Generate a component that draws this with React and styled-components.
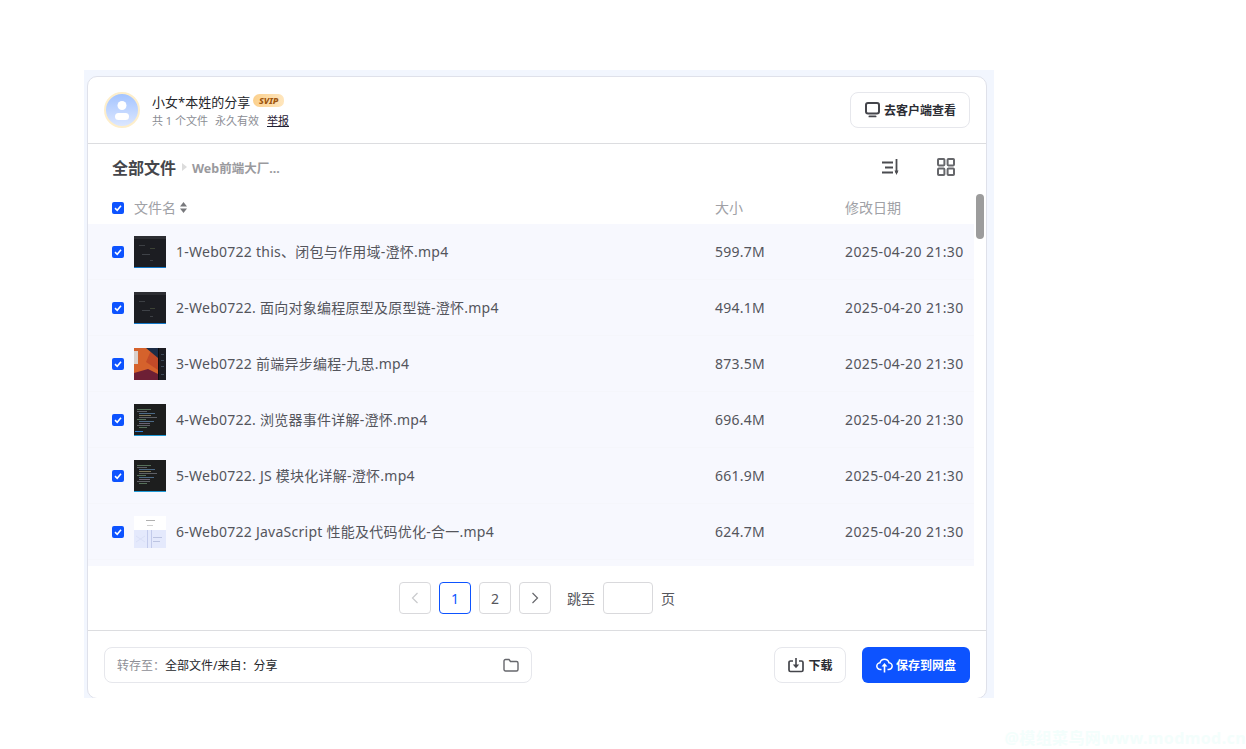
import React from "react";
import styled, { createGlobalStyle } from "styled-components";

const GlobalStyle = createGlobalStyle`
  html, body {
    margin: 0;
    padding: 0;
    background: #fff;
    font-family: "Noto Sans", "Noto Sans CJK SC", sans-serif;
  }
  * { box-sizing: border-box; }
`;

const Page = styled.div`
  position: relative;
  width: 1246px;
  height: 749px;
  padding: 70px 0 0 84px;
  overflow: hidden;
`;
const Halo = styled.div`
  width: 910px;
  height: 628px;
  padding: 6px 7px 0 3px;
  background: #f2f6fe;
  overflow: hidden;
`;
const Card = styled.div`
  position: relative;
  width: 900px;
  height: 623px;
  background: #fff;
  border: 1px solid #dfe1ea;
  border-radius: 10px;
  display: flex;
  flex-direction: column;
`;
const Header = styled.div`
  height: 67px;
  flex: none;
  padding: 0 16px;
  display: flex;
  align-items: center;
  border-bottom: 1px solid #dcdde0;
`;
const Avatar = styled.div`
  width: 36px;
  height: 36px;
  flex: none;
  border-radius: 50%;
  border: 2px solid #fdeecb;
  background: linear-gradient(180deg, #a4c4ff, #dce7ff);
  display: flex;
  align-items: center;
  justify-content: center;
`;
const Owner = styled.div`
  margin-left: 12px;
  flex: 1;
`;
const OwnerName = styled.div`
  display: flex;
  align-items: center;
  height: 18px;
  font-size: 13px;
  color: #25262b;
`;
const Badge = styled.span`
  margin: -2px 0 0 3px;
  width: 31px;
  height: 13px;
  border-radius: 7px 6px 6px 7px;
  background: linear-gradient(90deg, #fbd08d, #ffe6bd);
  color: #a0560e;
  font-size: 9px;
  line-height: 13px;
  font-weight: 800;
  font-style: italic;
  text-align: center;
`;
const OwnerMeta = styled.div`
  display: flex;
  gap: 8px;
  margin-top: 2px;
  height: 16px;
  align-items: center;
  font-size: 11px;
  color: #8b8d94;
`;
const FileCount = styled.span`
  width: 55px;
  white-space: nowrap;
`;
const Report = styled.span`
  color: #1f2033;
  text-decoration: underline;
`;
const GhostButton = styled.div`
  height: 36px;
  width: ${(p) => p.$width}px;
  flex: none;
  padding-left: 1px;
  border: 1px solid #e6e7ec;
  border-radius: 8px;
  background: #fff;
  display: flex;
  align-items: center;
  justify-content: center;
  gap: 4px;
  font-size: 12px;
  font-weight: 700;
  color: #2b2c33;
`;
const Crumbs = styled.div`
  height: 46px;
  flex: none;
  padding: 0 31px 0 24px;
  display: flex;
  align-items: center;
`;
const CrumbRoot = styled.span`
  font-size: 16px;
  font-weight: 700;
  color: #45464b;
`;
const CrumbArrow = styled.span`
  width: 0;
  height: 0;
  margin: 0 5px 0 6px;
  border-left: 5px solid #dcdcdc;
  border-top: 4px solid transparent;
  border-bottom: 4px solid transparent;
`;
const CrumbLeaf = styled.span`
  flex: 1;
  font-size: 12.5px;
  font-weight: 700;
  color: #9a9a9e;
`;
const ViewTools = styled.div`
  display: flex;
  align-items: center;
  gap: 37px;
`;
const Columns = styled.div`
  display: grid;
  grid-template-columns: 603px 130px 1fr;
  padding-left: 24px;
  width: 886px;
`;
const HeadRow = styled(Columns)`
  height: 34px;
  flex: none;
  align-items: center;
  font-size: 14px;
  color: #a0a1a6;
`;
const NameHead = styled.div`
  display: flex;
  align-items: center;
`;
const HeadCheck = styled.span`
  display: flex;
  margin: 2px 10px 0 0;
`;
const HeadSort = styled.span`
  display: inline-flex;
  margin-left: 4px;
`;
const List = styled.div`
  width: 886px;
  height: 342px;
  flex: none;
  background: #f7f8fe;
`;
const Row = styled(Columns)`
  height: 56px;
  align-items: center;
  font-size: 14px;
  letter-spacing: 0.25px;
  line-height: 20px;
  color: #54555c;
  border-bottom: 1px solid #f5f6fb;
`;
const NameCell = styled.div`
  display: flex;
  align-items: center;
`;
const DateCell = styled.span`
  letter-spacing: 0.38px;
  white-space: nowrap;
`;
const Check = styled.span`
  width: 12px;
  height: 12px;
  flex: none;
  border-radius: 2px;
  background: #0d53ff;
  display: flex;
  align-items: center;
  justify-content: center;
`;
const ThumbBox = styled.span`
  width: 32px;
  height: 32px;
  margin: 0 10px;
  flex: none;
  display: block;
  line-height: 0;
`;
const Scrollbar = styled.div`
  position: absolute;
  left: 888px;
  top: 117px;
  width: 8px;
  height: 45px;
  border-radius: 4px;
  background: #9c9c9c;
`;
const Pager = styled.div`
  height: 65px;
  flex: none;
  display: flex;
  align-items: center;
  justify-content: center;
  gap: 8px;
  font-size: 14px;
  color: #55565c;
  border-bottom: 1px solid #dcdde0;
`;
const PageButton = styled.div`
  width: 32px;
  height: 32px;
  border-radius: 4px;
  border: 1px solid ${(p) => (p.$active ? "#0d53ff" : "#d9d9dc")};
  color: ${(p) => (p.$active ? "#0d53ff" : "#55565c")};
  display: flex;
  align-items: center;
  justify-content: center;
`;
const JumpLabel = styled.span`
  margin-left: 8px;
`;
const JumpInput = styled.div`
  width: 50px;
  height: 32px;
  border: 1px solid #d9d9dc;
  border-radius: 4px;
`;
const Footer = styled.div`
  flex: none;
  padding: 16px 16px 0;
  display: flex;
  align-items: center;
`;
const SavePath = styled.div`
  width: 428px;
  height: 36px;
  margin-right: auto;
  padding: 0 12px;
  border: 1px solid #e6e7ec;
  border-radius: 8px;
  display: flex;
  align-items: center;
  font-size: 12px;
  color: #26272b;
`;
const SaveLabel = styled.span`
  color: #8e8f96;
`;
const SaveValue = styled.span`
  flex: 1;
`;
const PrimaryButton = styled.div`
  width: 108px;
  height: 36px;
  margin-left: 16px;
  border-radius: 6px;
  background: #0d53ff;
  color: #fff;
  font-size: 12px;
  font-weight: 700;
  display: flex;
  align-items: center;
  justify-content: center;
  gap: 3px;
`;
const Watermark = styled.div`
  position: absolute;
  right: 0;
  bottom: 0;
  font-size: 16px;
  font-weight: 700;
  letter-spacing: 0.4px;
  white-space: nowrap;
  color: #f3fefc;
`;

const files = [
  { name: "1-Web0722 this、闭包与作用域-澄怀.mp4", size: "599.7M", thumb: "dark" },
  { name: "2-Web0722. 面向对象编程原型及原型链-澄怀.mp4", size: "494.1M", thumb: "dark2" },
  { name: "3-Web0722 前端异步编程-九思.mp4", size: "873.5M", thumb: "orange" },
  { name: "4-Web0722. 浏览器事件详解-澄怀.mp4", size: "696.4M", thumb: "code" },
  { name: "5-Web0722. JS 模块化详解-澄怀.mp4", size: "661.9M", thumb: "code2" },
  { name: "6-Web0722 JavaScript 性能及代码优化-合一.mp4", size: "624.7M", thumb: "light" },
];

const codeLines = [
  [3, 5, 14, "#56705a"], [3, 7, 10, "#5e6066"], [5, 9, 16, "#4d6a86"], [5, 11, 12, "#7c7558"],
  [5, 13, 18, "#5e6066"], [3, 15, 9, "#56705a"], [5, 17, 15, "#4d6a86"], [5, 19, 11, "#6a6274"],
  [3, 21, 13, "#5e6066"], [5, 23, 8, "#56705a"],
];

function Thumb({ kind }) {
  if (kind === "orange") {
    return (
      <svg width="32" height="32" viewBox="0 0 32 32">
        <rect width="32" height="32" fill="#1c1c22" />
        <rect width="24" height="32" fill="#c24a28" />
        <path d="M0 0H18L12 14 24 22V32H0Z" fill="#d5622c" />
        <path d="M0 25L14 21 24 26V32H0Z" fill="#6d1f35" />
        <path d="M12 0H24V10Z" fill="#1d2c46" />
        <rect x="0" y="3" width="4" height="13" fill="#d9cfca" />
        <rect x="24" y="0" width="1" height="32" fill="#0c0c10" />
        <rect x="27" y="6" width="3" height="1" fill="#3f4a58" />
        <rect x="27" y="12" width="3" height="1" fill="#3f4a58" />
        <rect x="27" y="18" width="3" height="1" fill="#3f4a58" />
        <rect x="27" y="26" width="3" height="1" fill="#3f4a58" />
      </svg>
    );
  }
  if (kind === "light") {
    return (
      <svg width="32" height="32" viewBox="0 0 32 32">
        <rect width="32" height="32" fill="#fff" />
        <rect x="12" y="4" width="9" height="1" fill="#b0b0b0" />
        <rect x="13" y="9" width="6" height="1" fill="#cfcfcf" />
        <rect y="14" width="32" height="18" fill="#e4e9fc" />
        <rect x="13" y="14" width="1" height="18" fill="#c3cbeb" />
        <rect x="17" y="14" width="1" height="18" fill="#c3cbeb" />
        <path d="M2 20L11 26M2 26L11 20" stroke="#d2d8f2" strokeWidth="0.6" />
        <rect x="19" y="21" width="9" height="1" fill="#bcc4e2" />
        <rect x="19" y="25" width="7" height="1" fill="#bcc4e2" />
      </svg>
    );
  }
  if (kind === "code" || kind === "code2") {
    return (
      <svg width="32" height="32" viewBox="0 0 32 32">
        <rect width="32" height="32" fill="#1d1e1e" />
        {codeLines.map(([x, y, w, c], i) => (
          <rect key={i} x={x} y={y} width={w} height="1" fill={c} />
        ))}
        <rect x="0" y="31" width="32" height="1" fill="#1f9ad6" />
        {kind === "code" && <rect x="1" y="27" width="8" height="1" fill="#2b7fd0" />}
      </svg>
    );
  }
  return (
    <svg width="32" height="32" viewBox="0 0 32 32">
      <rect width="32" height="32" fill="#1c1d22" />
      <rect width="32" height="3" fill="#2d2e33" />
      <rect x="5" y="9" width="6" height="1" fill="#3c3f44" />
      <rect x="8" y="18" width="8" height="1" fill="#3f4248" />
      <rect x="16" y={kind === "dark" ? 12 : 16} width="5" height="1" fill="#3c4234" />
      <rect x="16" y="24" width="3" height="1" fill="#3c3f44" />
      <rect y="31" width="32" height="1" fill="#1378c8" />
    </svg>
  );
}

function CheckBox() {
  return (
    <Check>
      <svg width="8" height="8" viewBox="0 0 8 8">
        <path d="M1 4.2L3.2 6.3 7 1.8" fill="none" stroke="#fff" strokeWidth="1.6" />
      </svg>
    </Check>
  );
}

function App() {
  return (
    <Page>
      <GlobalStyle />
      <Halo>
        <Card>
          <Header>
            <Avatar>
              <svg width="20" height="24" viewBox="0 0 20 24">
                <circle cx="10" cy="7.5" r="4.5" fill="#fff" />
                <rect x="3" y="15" width="14" height="7" rx="3.5" fill="#fff" />
              </svg>
            </Avatar>
            <Owner>
              <OwnerName>
                小女*本姓的分享<Badge>SVIP</Badge>
              </OwnerName>
              <OwnerMeta>
                <FileCount>共 1 个文件</FileCount>
                <span>永久有效</span>
                <Report>举报</Report>
              </OwnerMeta>
            </Owner>
            <GhostButton $width={120}>
              <svg width="15" height="16" viewBox="0 0 15 16">
                <rect x="1" y="1" width="13" height="10.5" rx="2" fill="none" stroke="#44454b" strokeWidth="2" />
                <rect x="3.5" y="13.5" width="8" height="1.8" rx="0.9" fill="#44454b" />
              </svg>
              去客户端查看
            </GhostButton>
          </Header>
          <Crumbs>
            <CrumbRoot>全部文件</CrumbRoot>
            <CrumbArrow />
            <CrumbLeaf>Web前端大厂...</CrumbLeaf>
            <ViewTools>
              <svg width="19" height="16" viewBox="0 0 19 16">
                <path d="M1 3.5H12M4 8.5H12M1 13.5H12" stroke="#4b4c50" strokeWidth="1.8" />
                <path d="M15.5 0V14" stroke="#4b4c50" strokeWidth="1.8" />
                <path d="M13.5 11.5L15.5 16 17.5 11.5Z" fill="#4b4c50" />
              </svg>
              <svg width="18" height="18" viewBox="0 0 18 18">
                <g fill="none" stroke="#66676b" strokeWidth="2">
                  <rect x="1" y="1" width="6.4" height="6.4" rx="0.8" />
                  <rect x="10.6" y="1" width="6.4" height="6.4" rx="0.8" />
                  <rect x="1" y="10.6" width="6.4" height="6.4" rx="0.8" />
                  <rect x="10.6" y="10.6" width="6.4" height="6.4" rx="0.8" />
                </g>
              </svg>
            </ViewTools>
          </Crumbs>
          <HeadRow>
            <NameHead>
              <HeadCheck>
                <CheckBox />
              </HeadCheck>
              <span>文件名</span>
              <HeadSort>
                <svg width="7" height="11" viewBox="0 0 7 11">
                  <path d="M3.5 0L7 4.5H0Z" fill="#77787c" />
                  <path d="M3.5 11L0 6.5H7Z" fill="#77787c" />
                </svg>
              </HeadSort>
            </NameHead>
            <span>大小</span>
            <span>修改日期</span>
          </HeadRow>
          <List>
            {files.map((f) => (
              <Row key={f.name}>
                <NameCell>
                  <CheckBox />
                  <ThumbBox>
                    <Thumb kind={f.thumb} />
                  </ThumbBox>
                  <span>{f.name}</span>
                </NameCell>
                <span>{f.size}</span>
                <DateCell>2025-04-20 21:30</DateCell>
              </Row>
            ))}
          </List>
          <Scrollbar />
          <Pager>
            <PageButton>
              <svg width="10" height="12" viewBox="0 0 10 12">
                <path d="M7.5 1L2.5 6 7.5 11" fill="none" stroke="#c9cacd" strokeWidth="1.2" />
              </svg>
            </PageButton>
            <PageButton $active>1</PageButton>
            <PageButton>2</PageButton>
            <PageButton>
              <svg width="10" height="12" viewBox="0 0 10 12">
                <path d="M2.5 1L7.5 6 2.5 11" fill="none" stroke="#66676c" strokeWidth="1.2" />
              </svg>
            </PageButton>
            <JumpLabel>跳至</JumpLabel>
            <JumpInput />
            <span>页</span>
          </Pager>
          <Footer>
            <SavePath>
              <SaveLabel>转存至：</SaveLabel>
              <SaveValue>全部文件/来自：分享</SaveValue>
              <svg width="16" height="14" viewBox="0 0 16 14">
                <path d="M1 3a1.5 1.5 0 0 1 1.5-1.5H6L7.5 3.5H13.5A1.5 1.5 0 0 1 15 5V11.5A1.5 1.5 0 0 1 13.5 13H2.5A1.5 1.5 0 0 1 1 11.5Z" fill="none" stroke="#66676c" strokeWidth="1.4" />
              </svg>
            </SavePath>
            <GhostButton $width={72}>
              <svg width="16" height="16" viewBox="0 0 16 16">
                <path d="M5 4H2.5A1.5 1.5 0 0 0 1 5.5V13A1.5 1.5 0 0 0 2.5 14.5H13.5A1.5 1.5 0 0 0 15 13V5.5A1.5 1.5 0 0 0 13.5 4H11" fill="none" stroke="#44454b" strokeWidth="1.7" />
                <path d="M8 1V8" stroke="#44454b" strokeWidth="1.6" />
                <path d="M4.8 7.5H11.2L8 11.2Z" fill="#44454b" />
              </svg>
              下载
            </GhostButton>
            <PrimaryButton>
              <svg width="17" height="16" viewBox="0 0 17 16">
                <path d="M5.5 12.5H4.5A3.4 3.4 0 0 1 4 5.7 4.7 4.7 0 0 1 13 5.7 3.4 3.4 0 0 1 12.5 12.5H11.5" fill="none" stroke="#fff" strokeWidth="1.5" />
                <path d="M8.5 8V15.5" stroke="#fff" strokeWidth="1.6" />
                <path d="M5.6 9.5L8.5 6 11.4 9.5Z" fill="#fff" />
              </svg>
              保存到网盘
            </PrimaryButton>
          </Footer>
        </Card>
      </Halo>
      <Watermark>@模组菜鸟网www.modmod.cn</Watermark>
    </Page>
  );
}

export default App;
